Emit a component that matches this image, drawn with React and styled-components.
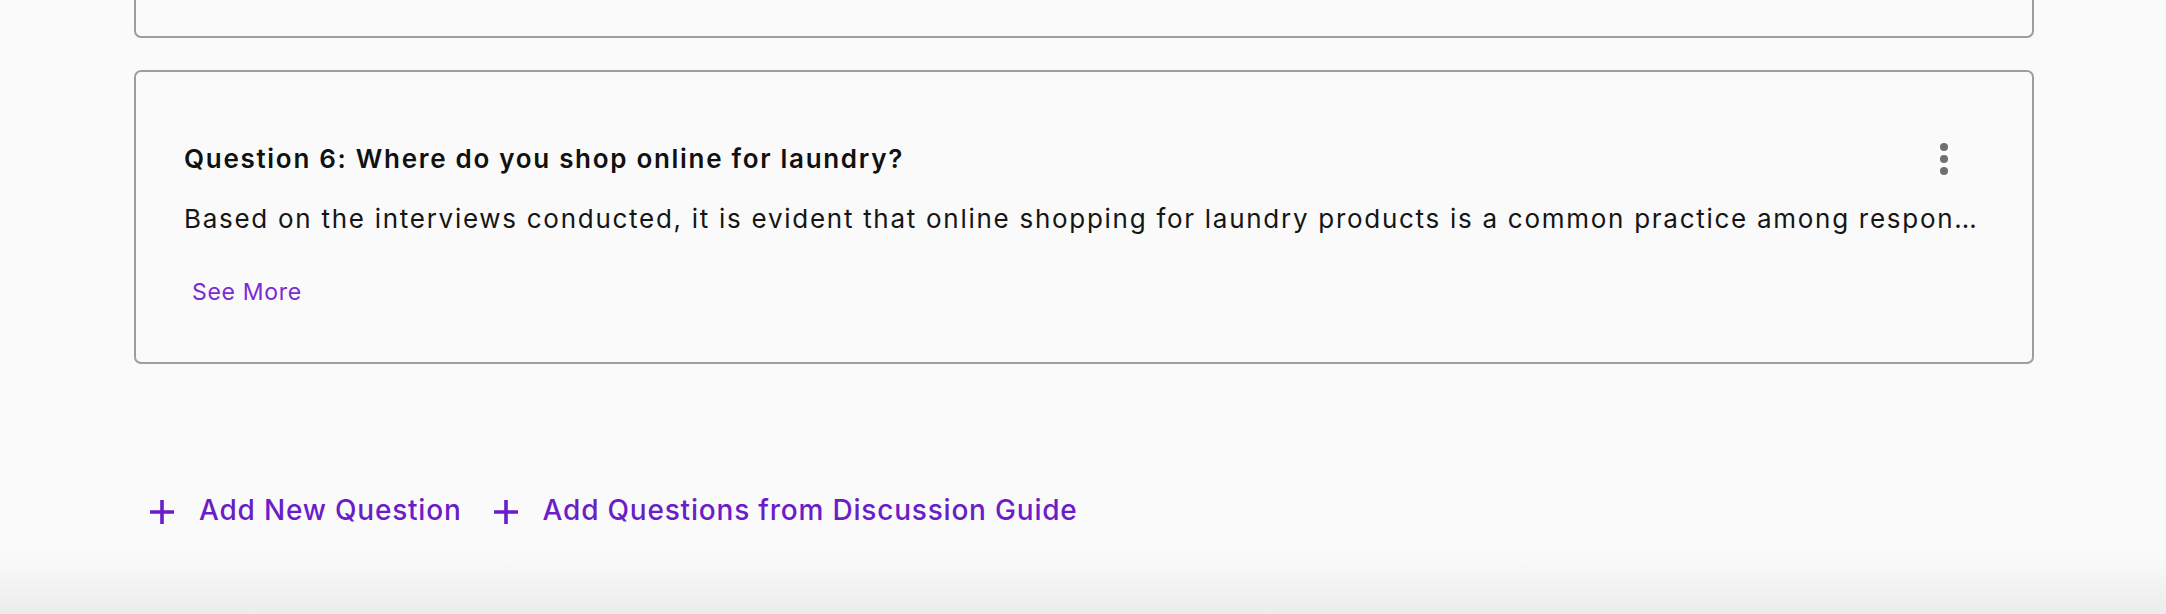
import React from "react";
import styled, { createGlobalStyle } from "styled-components";

const GlobalStyle = createGlobalStyle`
  * { box-sizing: border-box; }
  html, body {
    margin: 0;
    padding: 0;
  }
  body {
    min-height: 614px;
    font-family: Inter, "Noto Sans", sans-serif;
    color: #111;
    background: linear-gradient(to bottom, #fafafa 0, #fafafa 555px, #ececec 614px);
    overflow: hidden;
  }
`;

const Page = styled.div`
  padding: 0 132px 0 134px;
`;

const List = styled.div`
  display: flex;
  flex-direction: column;
  gap: 32px;
  margin-top: -256px;
`;

const Card = styled.div`
  width: 1900px;
  border: 2px solid #9d9d9d;
  border-radius: 7px;
  background: #fafafa;
  padding: 56px 48px 48px 48px;
`;

const Header = styled.div`
  display: flex;
  align-items: center;
  justify-content: space-between;
  height: 62px;
`;

const Title = styled.h3`
  margin: 0;
  font-size: 26px;
  line-height: 32px;
  font-weight: 600;
  letter-spacing: 1.7px;
  color: #111;
`;

const KebabButton = styled.button`
  width: 80px;
  height: 62px;
  border: none;
  background: none;
  padding: 0;
  display: flex;
  align-items: center;
  justify-content: center;
  cursor: pointer;
`;

const Summary = styled.p`
  margin: 11px 0 0 0;
  font-size: 26px;
  line-height: 36px;
  font-weight: 400;
  letter-spacing: 1.72px;
  color: #151515;
  white-space: nowrap;
  overflow: hidden;
  text-overflow: ellipsis;
`;

const SeeMore = styled.button`
  margin-top: 33px;
  border: none;
  background: none;
  padding: 8px;
  font-family: inherit;
  font-size: 23px;
  line-height: 28px;
  letter-spacing: 0.7px;
  color: #7a2bd3;
  cursor: pointer;
`;

const Actions = styled.div`
  display: flex;
  align-items: center;
  margin-top: 120px;
`;

const AddButton = styled.button`
  display: flex;
  align-items: center;
  gap: 25px;
  border: none;
  background: none;
  padding: 8px 16px;
  font-family: inherit;
  font-size: 28px;
  line-height: 36px;
  font-weight: 500;
  letter-spacing: 0.8px;
  color: #6b1dc8;
  cursor: pointer;

  & svg {
    margin-top: 4px;
  }
`;

const Kebab = () => (
  <svg width="8" height="32" viewBox="0 0 8 32">
    <circle cx="4" cy="4" r="4" fill="#6f6f6f" />
    <circle cx="4" cy="16" r="4" fill="#6f6f6f" />
    <circle cx="4" cy="28" r="4" fill="#6f6f6f" />
  </svg>
);

const Plus = () => (
  <svg width="24" height="24" viewBox="0 0 24 24">
    <path d="M12 0 V24 M0 12 H24" stroke="#6b1dc8" strokeWidth="3.6" fill="none" />
  </svg>
);

const questions = [
  {
    id: 5,
    title: "Question 5: How often do you do laundry each week?",
    summary:
      "Most respondents reported doing laundry two to three times a week, with larger households doing it more often.",
  },
  {
    id: 6,
    title: "Question 6: Where do you shop online for laundry?",
    summary:
      "Based on the interviews conducted, it is evident that online shopping for laundry products is a common practice among respondents, with most of them naming large marketplaces.",
  },
];

export default function App() {
  return (
    <>
      <GlobalStyle />
      <Page>
        <List>
          {questions.map((q) => (
            <Card key={q.id}>
              <Header>
                <Title>{q.title}</Title>
                <KebabButton aria-label="More options">
                  <Kebab />
                </KebabButton>
              </Header>
              <Summary>{q.summary}</Summary>
              <SeeMore>See More</SeeMore>
            </Card>
          ))}
        </List>
        <Actions>
          <AddButton>
            <Plus />
            Add New Question
          </AddButton>
          <AddButton>
            <Plus />
            Add Questions from Discussion Guide
          </AddButton>
        </Actions>
      </Page>
    </>
  );
}
